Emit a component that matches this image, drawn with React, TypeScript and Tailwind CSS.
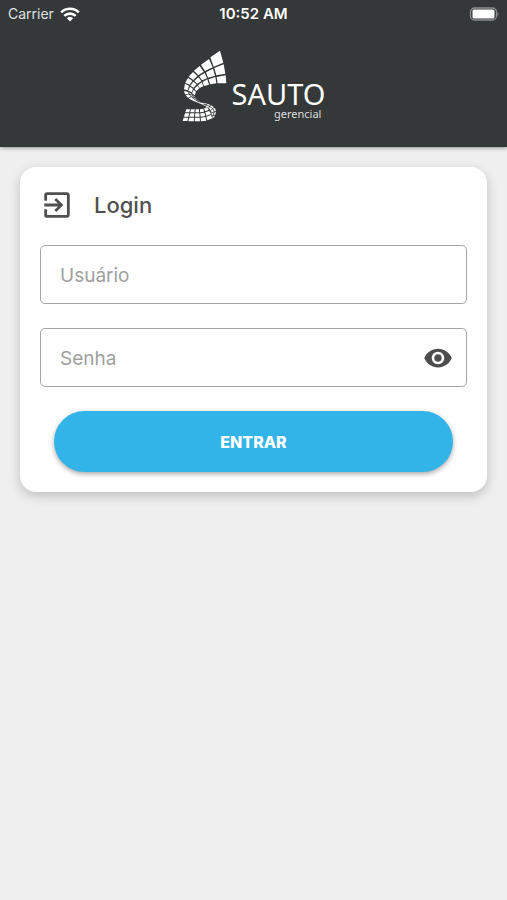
import { useState } from "react";
import { MdExitToApp, MdVisibility, MdVisibilityOff } from "react-icons/md";

const LOGO_CELLS = [
  // outer band
  "118,52 147,32 157,68 128,80",
  "90,74 114,57 125,82 102,93",
  "69,92 86,78 98,95 82,106",
  "53,110 66,96 79,108 67,120",
  "43,128 51,114 64,122 56,134",
  "39,148 42,131 54,137 50,151",
  // middle band
  "130,84 158,73 163,101 136,106",
  "105,97 126,86 132,107 111,113",
  "85,109 101,99 108,115 93,121",
  "70,123 82,112 91,123 79,131",
  "58,137 67,125 77,133 68,143",
  "52,152 57,140 66,146 62,157",
  // inner band
  "137,111 164,106 166,130 140,130",
  "113,118 133,111 136,130 117,133",
  "95,126 109,118 114,134 99,138",
  "81,136 92,127 97,139 86,144",
  "70,147 79,137 85,145 76,153",
  "63,160 68,149 75,156 71,166",
  // base, top row
  "46,208 57,208 55,217 43,217",
  "60,208 71,208 70,217 58,217",
  "74,208 84,208 84,217 73,217",
  "87,208 97,206 99,215 87,217",
  "100,205 108,202 113,210 102,214",
  // base, middle row
  "42,220 55,220 52,230 39,230",
  "58,220 70,220 69,230 55,230",
  "73,220 85,220 86,230 72,230",
  "88,220 100,218 103,228 89,230",
  "103,217 115,213 120,222 106,227",
  // base, bottom row
  "38,233 52,233 49,243 35,243",
  "55,233 69,233 68,244 52,244",
  "72,233 86,233 87,244 71,244",
  "89,233 103,231 106,242 90,244",
  "106,230 120,225 124,235 109,241",
];

function LogoMark() {
  return (
    <svg viewBox="33 27 138 222" className="h-[74px] w-[46px]" aria-hidden="true">
      <g fill="#fff">
        {LOGO_CELLS.map((points) => (
          <polygon key={points} points={points} />
        ))}
      </g>
      <path
        fill="#fff"
        d="M39 153 50 155 62 161 71 170C74 175 80 181 90 188 112 190 128 196 134 209 136 221 131 231 125 235L122 224C124 214 116 206 104 199 85 189 68 184 56 177 46 170 41 162 39 153Z"
      />
      <path
        fill="none"
        stroke="#343838"
        strokeWidth="2.5"
        d="M51 153C54 168 68 177 84 186M62 159C64 169 74 178 88 187M96 192C113 196 127 203 129 214 129 221 127 227 124 230M42 165 54 162 66 166M51 175 61 170 74 174M104 198 108 190M113 204 120 193M120 211 130 201M123 218 135 214M123 226 134 226"
      />
    </svg>
  );
}

function StatusBar() {
  return (
    <div className="grid h-7 grid-cols-3 items-center px-2 text-[15px] leading-5 text-white">
      <div className="flex items-center gap-[6px]">
        <span className="text-sm text-[#dfe0e0]">Carrier</span>
        <svg viewBox="0 0 20 15" className="h-[15px] w-5" aria-label="Wi-Fi">
          <g fill="none" stroke="#fff" strokeWidth="2.6">
            <path d="M1.2 5.4a12.6 12.6 0 0 1 17.6 0" />
            <path d="M4.3 8.9a8.2 8.2 0 0 1 11.4 0" />
          </g>
          <path fill="#fff" d="M6.9 11.2a4.5 4.5 0 0 1 6.2 0L10 14.5Z" />
        </svg>
      </div>
      <span className="text-center font-semibold whitespace-nowrap">10:52 AM</span>
      <svg viewBox="0 0 31 15" className="h-[15px] w-[31px] justify-self-end" aria-label="Bateria">
        <rect x="2.5" y="1" width="26" height="12" rx="4" fill="none" stroke="#8b8e8e" strokeWidth="1.3" />
        <rect x="4.5" y="2.5" width="22" height="9" rx="1.5" fill="#fff" />
        <path fill="#8b8e8e" d="M29.5 4.8q2 2.3 0 4.6Z" />
      </svg>
    </div>
  );
}

function Header() {
  return (
    <header className="bg-[#343838] shadow-[0_1px_4px_rgba(0,0,0,0.4)]">
      <StatusBar />
      <div className="flex justify-center gap-1 pt-[21px] pb-6">
        <LogoMark />
        <div className="flex flex-col pt-[29px] font-['Noto_Sans','Open_Sans',sans-serif] text-white">
          <span className="text-[29px] leading-8">SAUTO</span>
          <span className="-mt-[2px] pr-1 text-right text-[11px] leading-3 text-[#dcdddd]">gerencial</span>
        </div>
      </div>
    </header>
  );
}

function LoginCard() {
  const [showPassword, setShowPassword] = useState(false);
  const fieldClasses =
    "h-[59px] w-full rounded-[5px] border border-[#a6a6a6] bg-white pt-[2px] pl-[19px] text-[19px] text-[#4a4a4a] placeholder:text-[#a0a0a0] focus:outline-none focus:border-[#33b4e8]";

  return (
    <form
      className="rounded-2xl bg-white p-5 shadow-[0_4px_12px_rgba(0,0,0,0.2)]"
      onSubmit={(e) => e.preventDefault()}
    >
      <div className="flex h-9 items-center gap-5 text-[#505050]">
        <MdExitToApp className="h-[34px] w-[34px]" />
        <h1 className="text-[22px] leading-8 font-medium">Login</h1>
      </div>

      <div className="mt-[22px]">
        <input
          id="usuario"
          type="text"
          aria-label="Usuário"
          placeholder="Usuário"
          className={`${fieldClasses} pr-5`}
        />
      </div>

      <div className="relative mt-6">
        <input
          id="senha"
          type={showPassword ? "text" : "password"}
          aria-label="Senha"
          placeholder="Senha"
          className={`${fieldClasses} pr-14`}
        />
        <button
          type="button"
          aria-label={showPassword ? "Ocultar senha" : "Mostrar senha"}
          onClick={() => setShowPassword(!showPassword)}
          className="absolute inset-y-0 right-[14px] flex items-center text-[#4d4d4d]"
        >
          {showPassword ? (
            <MdVisibilityOff className="h-[30px] w-[30px]" />
          ) : (
            <MdVisibility className="h-[30px] w-[30px]" />
          )}
        </button>
      </div>

      <div className="mt-6 px-[14px]">
        <button
          type="submit"
          className="h-[61px] w-full rounded-full bg-[#33b4e8] text-base font-extrabold text-white shadow-[0_2px_5px_rgba(0,0,0,0.35)]"
        >
          ENTRAR
        </button>
      </div>
    </form>
  );
}

function App() {
  return (
    <div className="min-h-screen bg-[#efefef] font-['Inter','Liberation_Sans',sans-serif]">
      <Header />
      <main className="p-5">
        <LoginCard />
      </main>
    </div>
  );
}

export default App;
